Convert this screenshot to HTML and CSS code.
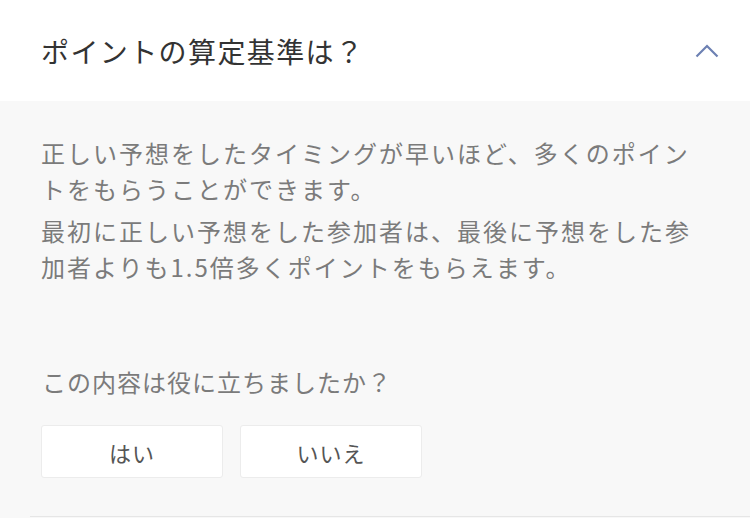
FILE: index.html
```html
<html>
<head>
	<title>FAQ</title>
	<link rel="stylesheet" href="styles.css">
	<meta name="viewport" content="width=device-width, initial-scale=1.0">
</head>
<body>
	<div class="faq">
		<div class="faqHead">
			<h2 class="faqTitle">ポイントの算定基準は？</h2>
			<svg class="chevron" width="24" height="14" viewBox="0 0 24 14">
				<polyline points="1.5,12.5 12,2 22.5,12.5" fill="none" stroke="#6d81b3" stroke-width="2.2"/>
			</svg>
		</div>
		<div class="faqBody">
			<p class="answer">正しい予想をしたタイミングが早いほど、多くのポイン<br>トをもらうことができます。</p>
			<p class="answer">最初に正しい予想をした参加者は、最後に予想をした参<br>加者よりも1.5倍多くポイントをもらえます。</p>
			<p class="question">この内容は役に立ちましたか？</p>
			<div class="votes">
				<button>はい</button>
				<button>いいえ</button>
			</div>
			<div class="divider"></div>
		</div>
	</div>
</body>
</html>
```
FILE: styles.css
```css
	body {
		margin: 0;
		background-color: #f8f8f8;
		font-family: "Noto Sans CJK JP", "Noto Sans", sans-serif;
	}

	.faqHead {
		display: flex;
		align-items: center;
		justify-content: space-between;
		height: 101px;
		padding: 0 31px 0 41px;
		background-color: #fff;
	}

	.faqTitle {
		margin: 0;
		font-size: 28px;
		font-weight: normal;
		letter-spacing: 1.4px;
		color: #333;
	}

	.faqBody {
		padding: 34px 0 0 41px;
	}

	.answer {
		margin: 0 0 6px 0;
		font-size: 24px;
		line-height: 36px;
		letter-spacing: 2px;
		color: #7b7b7b;
	}

	.question {
		margin: 79px 0 25px 1px;
		font-size: 24px;
		line-height: 36px;
		letter-spacing: 1px;
		color: #7b7b7b;
	}

	.votes {
		display: flex;
		gap: 17px;
	}

	.votes button {
		width: 182px;
		height: 53px;
		background-color: #fff;
		border: 1px solid #ececec;
		border-radius: 3px;
		font-family: "Noto Sans CJK JP", sans-serif;
		font-size: 22px;
		letter-spacing: 1px;
		color: #555;
	}

	.divider {
		margin: 38px 0 0 -11px;
		height: 1px;
		background-color: #e6e6e6;
	}
```
